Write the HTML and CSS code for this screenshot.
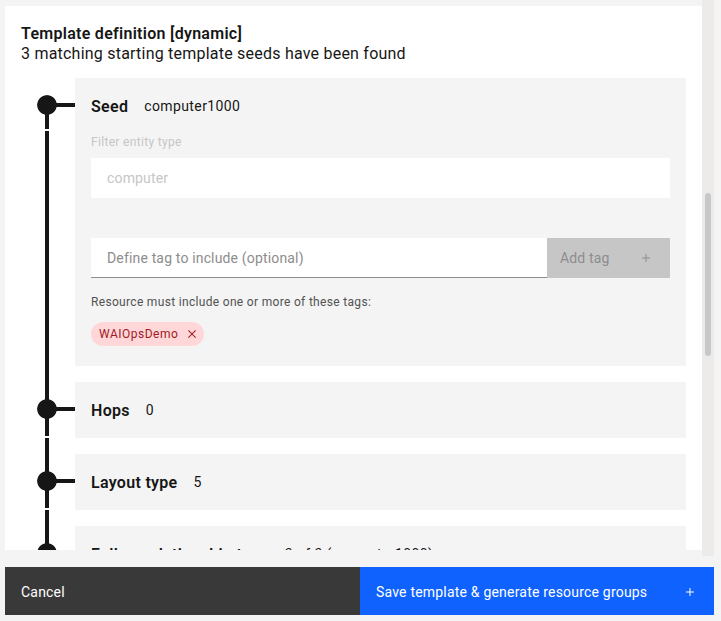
FILE: index.html
```html
<!DOCTYPE html>
<html lang="en">
<head>
<meta charset="utf-8">
<title>Template definition</title>
<link rel="stylesheet" href="styles.css">
</head>
<body>
<div class="frame">
  <div class="panel">
    <h2 class="title">Template definition [dynamic]</h2>
    <p class="subtitle">3 matching starting template seeds have been found</p>
    <div class="timeline">
      <div class="item">
        <div class="rail rail-first"></div>
        <div class="card">
          <div class="card-head"><span class="card-title">Seed</span><span class="card-value">computer1000</span></div>
          <div class="card-body">
            <label class="field-label">Filter entity type</label>
            <input class="text-input" type="text" placeholder="computer" disabled>
            <div class="tag-row">
              <input class="text-input tag-input" type="text" placeholder="Define tag to include (optional)">
              <button class="add-btn" type="button" disabled><span>Add tag</span>
                <svg class="icon" viewBox="0 0 32 32" width="16" height="16"><path d="M17 15V8h-2v7H8v2h7v7h2v-7h7v-2z"/></svg>
              </button>
            </div>
            <p class="helper">Resource must include one or more of these tags:</p>
            <span class="tag">WAIOpsDemo<span class="tag-close"><svg viewBox="0 0 32 32" width="16" height="16"><path d="M24 9.4L22.6 8 16 14.6 9.4 8 8 9.4 14.6 16 8 22.6 9.4 24 16 17.4 22.6 24 24 22.6 17.4 16 24 9.4z"/></svg></span></span>
          </div>
        </div>
      </div>
      <div class="item">
        <div class="rail"></div>
        <div class="card"><div class="card-head"><span class="card-title">Hops</span><span class="card-value">0</span></div></div>
      </div>
      <div class="item">
        <div class="rail"></div>
        <div class="card"><div class="card-head"><span class="card-title">Layout type</span><span class="card-value">5</span></div></div>
      </div>
      <div class="item">
        <div class="rail"></div>
        <div class="card"><div class="card-head"><span class="card-title">Follow relationship type</span><span class="card-value">3 of 3 (computer1000)</span></div></div>
      </div>
    </div>
  </div>
  <div class="scrollbar"><div class="thumb"></div></div>
</div>
<div class="footer">
  <button class="btn btn-secondary" type="button">Cancel</button>
  <button class="btn btn-primary" type="button"><span>Save template &amp; generate resource groups</span>
    <svg class="icon" viewBox="0 0 32 32" width="16" height="16"><path d="M17 15V8h-2v7H8v2h7v7h2v-7h7v-2z"/></svg>
  </button>
</div>
</body>
</html>
```
FILE: styles.css
```css
* { box-sizing: border-box; }
body {
  margin: 0;
  background: #f4f4f4;
  font-family: Roboto, "Noto Sans", sans-serif;
  color: #161616;
  width: 721px;
  height: 621px;
  overflow: hidden;
}
.frame {
  display: flex;
  height: 556px;
  padding-left: 5px;
}
.panel {
  width: 697px;
  margin-top: 6px;
  height: 544px;
  background: #ffffff;
  overflow: hidden;
  padding: 18px 16px 0 16px;
}
.title {
  margin: 0;
  font-size: 16px;
  line-height: 20px;
  font-weight: 600;
  letter-spacing: 0.28px;
}
.subtitle {
  margin: 0;
  font-size: 16px;
  line-height: 20px;
  font-weight: 400;
  letter-spacing: 0.22px;
}
.timeline {
  margin-top: 14px;
  margin-left: 16px;
}
.item {
  display: flex;
}
.rail {
  width: 38px;
  flex: none;
  --s: 0px;
  --g: 54px;
  background:
    radial-gradient(circle at 10px 27px, #161616 9.4px, transparent 10.2px) no-repeat,
    linear-gradient(#161616, #161616) 10px 25px / 28px 4px no-repeat,
    linear-gradient(#161616, #161616) 8px var(--s) / 4px calc(var(--g) - var(--s)) no-repeat,
    linear-gradient(#161616, #161616) 8px calc(var(--g) + 2px) / 4px 100% no-repeat;
}
.rail-first {
  --s: 27px;
  --g: 51px;
}
.card {
  flex: 1;
  background: #f4f4f4;
  margin-bottom: 16px;
}
.card-head {
  height: 56px;
  display: flex;
  align-items: center;
  gap: 16px;
  padding: 0 16px;
}
.card-title {
  font-size: 16px;
  font-weight: 600;
  letter-spacing: 0.3px;
}
.card-value {
  font-size: 14px;
  letter-spacing: 0.4px;
}
.card-body {
  padding: 0 16px 20px 16px;
}
.field-label {
  display: block;
  font-size: 12px;
  line-height: 16px;
  letter-spacing: 0.32px;
  color: #c6c6c6;
  margin-bottom: 8px;
}
.text-input {
  display: block;
  width: 100%;
  height: 40px;
  border: none;
  outline: none;
  background: #ffffff;
  padding: 0 16px;
  font-family: inherit;
  font-size: 14px;
  letter-spacing: 0.16px;
  color: #161616;
}
.text-input::placeholder { color: #8d8d8d; }
.text-input:disabled::placeholder { color: #c6c6c6; }
.tag-row {
  display: flex;
  margin-top: 40px;
}
.tag-input {
  flex: 1;
  border-bottom: 1px solid #8d8d8d;
}
.add-btn {
  width: 123px;
  height: 40px;
  flex: none;
  border: none;
  background: #c6c6c6;
  color: #8d8d8d;
  font-family: inherit;
  font-size: 14px;
  letter-spacing: 0.16px;
  display: flex;
  align-items: center;
  justify-content: space-between;
  padding: 0 16px 0 13px;
}
.icon { fill: currentColor; flex: none; }
.helper {
  margin: 16px 0 0 0;
  font-size: 12px;
  line-height: 16px;
  letter-spacing: 0.32px;
  color: #525252;
}
.tag {
  display: inline-flex;
  align-items: center;
  height: 24px;
  margin-top: 12px;
  padding: 0 4px 0 8px;
  border-radius: 12px;
  background: #ffd7d9;
  color: #a2191f;
  font-size: 12px;
  letter-spacing: 0.5px;
}
.tag-close {
  display: flex;
  width: 16px;
  height: 16px;
  margin-left: 6px;
  fill: #a2191f;
}
.scrollbar {
  width: 12px;
  flex: none;
  background: #ecebe9;
  padding: 193px 3px 0 3px;
}
.thumb {
  height: 163px;
  border-radius: 3px;
  background: #c8c8c8;
}
.footer {
  display: grid;
  grid-template-columns: 355px 354px;
  margin: 11px 0 0 5px;
  width: 709px;
  height: 48px;
}
.btn {
  border: none;
  height: 48px;
  display: flex;
  align-items: center;
  justify-content: space-between;
  padding: 1px 16px 0 16px;
  font-family: inherit;
  font-size: 14px;
  letter-spacing: 0.2px;
  color: #ffffff;
  text-align: left;
}
.btn-secondary { background: #393939; }
.btn-primary { background: #0f62fe; }
```
